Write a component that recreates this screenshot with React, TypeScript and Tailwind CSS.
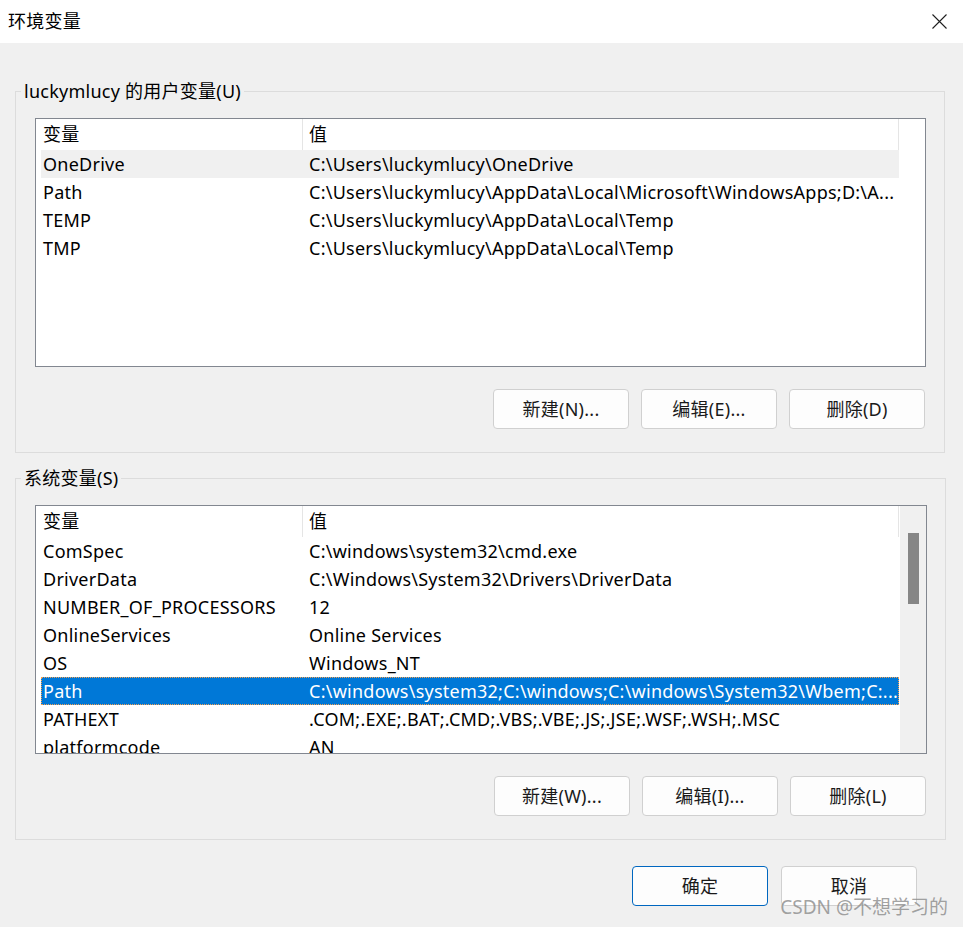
import React from "react";

type Row = { name: string; value: string };

const userVars: Row[] = [
  { name: "OneDrive", value: "C:\\Users\\luckymlucy\\OneDrive" },
  { name: "Path", value: "C:\\Users\\luckymlucy\\AppData\\Local\\Microsoft\\WindowsApps;D:\\A..." },
  { name: "TEMP", value: "C:\\Users\\luckymlucy\\AppData\\Local\\Temp" },
  { name: "TMP", value: "C:\\Users\\luckymlucy\\AppData\\Local\\Temp" },
];

const systemVars: Row[] = [
  { name: "ComSpec", value: "C:\\windows\\system32\\cmd.exe" },
  { name: "DriverData", value: "C:\\Windows\\System32\\Drivers\\DriverData" },
  { name: "NUMBER_OF_PROCESSORS", value: "12" },
  { name: "OnlineServices", value: "Online Services" },
  { name: "OS", value: "Windows_NT" },
  { name: "Path", value: "C:\\windows\\system32;C:\\windows;C:\\windows\\System32\\Wbem;C:..." },
  { name: "PATHEXT", value: ".COM;.EXE;.BAT;.CMD;.VBS;.VBE;.JS;.JSE;.WSF;.WSH;.MSC" },
  { name: "platformcode", value: "AN" },
];

function Button({ label, primary }: { label: string; primary?: boolean }) {
  return (
    <div
      className={
        "flex h-[40px] w-[136px] items-center justify-center rounded-[4px] border bg-[#fdfdfd] text-[18px] text-[#1a1a1a] " +
        (primary ? "border-[#0067c0]" : "border-[#d0d0d0]")
      }
    >
      {label}
    </div>
  );
}

function VarList({
  rows,
  hoverIndex,
  selectedIndex,
  scrollbar,
}: {
  rows: Row[];
  hoverIndex?: number;
  selectedIndex?: number;
  scrollbar?: boolean;
}) {
  return (
    <div className="flex h-[249px] overflow-hidden border border-[#828790] bg-white">
      <div className="flex w-[863px] shrink-0 flex-col">
        <div className="flex h-[31px] shrink-0 items-center">
          <div className="w-[266px] shrink-0 pl-[7px]">变量</div>
          <div className="h-full w-px bg-[#e5e5e5]" />
          <div className="flex-1 pl-[6px]">值</div>
          <div className="h-full w-px bg-[#e5e5e5]" />
        </div>
        {rows.map((r, i) => {
          const selected = i === selectedIndex;
          const hover = i === hoverIndex;
          return (
            <div
              key={r.name + i}
              className={
                "ml-[5px] flex h-[28px] shrink-0 items-center whitespace-nowrap " +
                (selected
                  ? "bg-[#0078d7] text-white outline-1 outline-offset-[-1px] outline-dotted outline-[#f5a050]"
                  : hover
                    ? "bg-[#f0f0f0]"
                    : "")
              }
            >
              <div className="w-[261px] shrink-0 overflow-hidden pl-[2px]">{r.name}</div>
              <div className="flex-1 overflow-hidden pl-[7px]">{r.value}</div>
            </div>
          );
        })}
      </div>
      {scrollbar ? (
        <div className="ml-px flex w-[26px] shrink-0 justify-center bg-[#f0f0f0]">
          <div className="mt-[27px] h-[71px] w-[11px] bg-[#868686]" />
        </div>
      ) : null}
    </div>
  );
}

function Group({
  title,
  rows,
  buttons,
  hoverIndex,
  selectedIndex,
  scrollbar,
}: {
  title: string;
  rows: Row[];
  buttons: string[];
  hoverIndex?: number;
  selectedIndex?: number;
  scrollbar?: boolean;
}) {
  return (
    <fieldset className="border border-[#dcdcdc] pt-[15px] pr-[18px] pb-[23px] pl-[19px]">
      <legend className="-ml-[14px] px-[3px] leading-[24px]">{title}</legend>
      <VarList rows={rows} hoverIndex={hoverIndex} selectedIndex={selectedIndex} scrollbar={scrollbar} />
      <div className="mt-[22px] flex justify-end gap-[12px] pr-px">
        {buttons.map((b) => (
          <Button key={b} label={b} />
        ))}
      </div>
    </fieldset>
  );
}

export default function App() {
  return (
    <div
      className="relative flex h-[927px] w-[963px] flex-col overflow-hidden bg-[#f0f0f0] text-[18px] tracking-[0.25px] text-black"
      style={{ fontFamily: '"Noto Sans", "Noto Sans CJK SC", sans-serif' }}
    >
      <div className="flex h-[43px] shrink-0 items-center justify-between bg-white pl-[8px] pr-[16px]">
        <span>环境变量</span>
        <svg width="15" height="15" viewBox="0 0 15 15" className="text-[#1f1f1f]">
          <path d="M0.5 0.5 L14.5 14.5 M14.5 0.5 L0.5 14.5" stroke="currentColor" strokeWidth="1.1" fill="none" />
        </svg>
      </div>

      <div className="flex flex-col pl-[15px] pr-[18px]">
        <div className="mt-[36px]">
          <Group
            title="luckymlucy 的用户变量(U)"
            rows={userVars}
            buttons={["新建(N)...", "编辑(E)...", "删除(D)"]}
            hoverIndex={0}
          />
        </div>
        <div className="mt-[13px]">
          <Group
            title="系统变量(S)"
            rows={systemVars}
            buttons={["新建(W)...", "编辑(I)...", "删除(L)"]}
            selectedIndex={5}
            scrollbar
          />
        </div>
        <div className="mt-[26px] flex justify-end gap-[13px] pr-[28px]">
          <Button label="确定" primary />
          <Button label="取消" />
        </div>
      </div>

      <span className="absolute bottom-[6px] right-[15px] text-[19px] tracking-normal text-[#8a8a8a]/80">
        CSDN @不想学习的
      </span>
    </div>
  );
}
